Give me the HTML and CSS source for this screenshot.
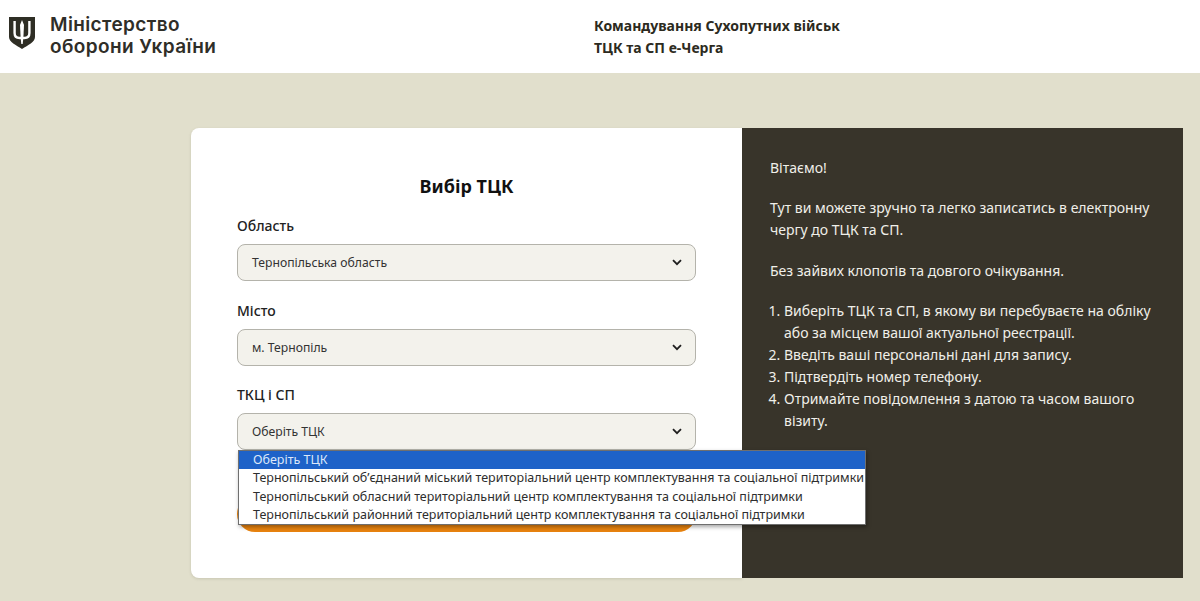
FILE: index.html
```html
<!DOCTYPE html>
<html lang="uk">
<head>
<meta charset="utf-8">
<title>Вибір ТЦК</title>
<link rel="stylesheet" href="styles.css">
</head>
<body>
<header class="topbar">
  <div class="brand">
    <svg class="crest" viewBox="0 0 26 32" aria-hidden="true">
      <path fill="#2f2e25" d="M0 0H26V20C26 25 19 28 13 32C7 28 0 25 0 20Z"/>
      <path fill="none" stroke="#fff" stroke-width="2.4" d="M5.6 4V16C5.6 19.4 7.8 21 10.5 21H15.5C18.2 21 20.4 19.4 20.4 16V4"/>
      <path fill="#fff" d="M13 3 15 8 14.4 20 13.7 27H12.3L11.6 20 11 8Z"/>
    </svg>
    <div class="brand-name">Міністерство<br>оборони України</div>
  </div>
  <div class="service">Командування Сухопутних військ<br>ТЦК та СП е-Черга</div>
</header>
<main class="page">
  <div class="panel">
    <section class="form-card">
      <h1 class="form-title">Вибір ТЦК</h1>
      <div class="field">
        <div class="field-label">Область</div>
        <div class="select"><span>Тернопільська область</span><svg class="chev" viewBox="0 0 10 7"><path d="M1 1.2 5 5.2 9 1.2"/></svg></div>
      </div>
      <div class="field">
        <div class="field-label">Місто</div>
        <div class="select"><span>м. Тернопіль</span><svg class="chev" viewBox="0 0 10 7"><path d="M1 1.2 5 5.2 9 1.2"/></svg></div>
      </div>
      <div class="field">
        <div class="field-label">ТКЦ і СП</div>
        <div class="select"><span>Оберіть ТЦК</span><svg class="chev" viewBox="0 0 10 7"><path d="M1 1.2 5 5.2 9 1.2"/></svg></div>
        <ul class="dropdown">
          <li class="option active">Оберіть ТЦК</li>
          <li class="option">Тернопільський об’єднаний міський територіальний центр комплектування та соціальної підтримки</li>
          <li class="option">Тернопільський обласний територіальний центр комплектування та соціальної підтримки</li>
          <li class="option">Тернопільський районний територіальний центр комплектування та соціальної підтримки</li>
        </ul>
      </div>
      <div class="submit"></div>
    </section>
    <section class="info">
      <p>Вітаємо!</p>
      <p>Тут ви можете зручно та легко записатись в електронну чергу до ТЦК та СП.</p>
      <p>Без зайвих клопотів та довгого очікування.</p>
      <ol class="steps">
        <li>Виберіть ТЦК та СП, в якому ви перебуваєте на обліку або за місцем вашої актуальної реєстрації.</li>
        <li>Введіть ваші персональні дані для запису.</li>
        <li>Підтвердіть номер телефону.</li>
        <li>Отримайте повідомлення з датою та часом вашого візиту.</li>
      </ol>
    </section>
  </div>
</main>
</body>
</html>
```
FILE: styles.css
```css
* { box-sizing: border-box; }
html, body { margin: 0; height: 100%; }
body {
  background: #e1dfcc;
  font-family: "Noto Sans", "Open Sans", sans-serif;
  color: #1c1c1c;
  overflow: hidden;
}
.topbar {
  height: 73px;
  background: #fff;
  display: flex;
  align-items: flex-start;
}
.brand {
  width: 594px;
  padding: 14px 0 0 9px;
  display: flex;
  gap: 15px;
}
.crest { width: 26px; height: 32px; margin-top: 3px; flex: none; }
.brand-name {
  font-family: Inter, "Noto Sans", sans-serif;
  font-size: 19px;
  line-height: 22px;
  font-weight: 600;
  letter-spacing: .38px;
  color: #2f2e28;
}
.service {
  padding-top: 15px;
  font-size: 14px;
  line-height: 22px;
  font-weight: 700;
  color: #2c2a20;
}
.page { padding: 55px 17px 0 191px; }
.panel { display: flex; height: 450px; }
.form-card {
  width: 551px;
  background: #fff;
  border-radius: 8px 0 0 8px;
  padding: 46px 46px 0;
  box-shadow: 0 1px 3px rgba(90, 88, 60, .18);
}
.form-title {
  margin: 0 0 17px;
  text-align: center;
  font-size: 18px;
  line-height: 25px;
  font-weight: 700;
  color: #111;
}
.field { position: relative; margin-bottom: 19.5px; }
.field-label {
  font-size: 14px;
  line-height: 20px;
  font-weight: 500;
  margin-bottom: 8px;
  color: #222;
}
.select {
  height: 37px;
  width: 459px;
  background: #f3f2ec;
  border: 1px solid #b4b3ab;
  border-radius: 8px;
  padding: 0 13px 0 14px;
  display: flex;
  align-items: center;
  justify-content: space-between;
  font-size: 12.2px;
  color: #333;
}
.chev { width: 10px; height: 7px; fill: none; stroke: #1f1f1f; stroke-width: 1.8; }
.dropdown {
  position: absolute;
  z-index: 2;
  top: 65px;
  left: 1px;
  width: 628px;
  height: 75px;
  margin: 0;
  padding: 0;
  list-style: none;
  background: #fff;
  border: 1px solid #6f6f6f;
  box-shadow: 1px 2px 4px rgba(0, 0, 0, .35);
  font-size: 12.5px;
  color: #2e2e2e;
}
.option { height: 18.25px; line-height: 18px; padding-left: 14px; white-space: nowrap; }
.option.active { background: #1e62c8; color: #dce8fa; }
.submit {
  height: 36px;
  width: 459px;
  margin-top: 46px;
  background: #e8830f;
  border-radius: 18px;
}
.info {
  width: 441px;
  background: #38342a;
  color: #f0efe9;
  padding: 29px 27px 0 28px;
  font-size: 14px;
  line-height: 22px;
}
.info p { margin: 0 0 19px; }
.info p:first-child { margin-bottom: 18px; }
.info p:nth-of-type(3) { margin-bottom: 18px; }
.steps { margin: 0; padding: 0 0 0 14px; }
```
